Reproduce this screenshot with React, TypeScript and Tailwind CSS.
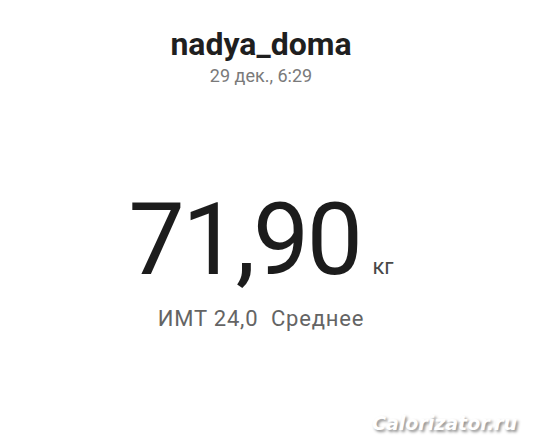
import React from 'react';

const App: React.FC = () => {
  return (
    <div className="relative w-[537px] h-[445px] bg-white overflow-hidden" style={{ fontFamily: 'Roboto, "Noto Sans", sans-serif' }}>
      <div className="flex flex-col items-center pr-[15px]">
        {/* Header */}
        <div className="mt-[24px] text-[32px] leading-[40px] font-bold text-[#1f1f1f]">nadya_doma</div>
        <div className="mt-[2px] text-[18px] leading-[20px] text-[#7a7a7a]">29 дек., 6:29</div>

        {/* Weight */}
        <div className="mt-[104px] flex items-baseline">
          <span className="text-[100px] leading-[100px] text-[#1c1c1c] tracking-[-2.5px]">71,90</span>
          <span className="ml-[12px] text-[22px] text-[#484848]">кг</span>
        </div>
        <div className="mt-[15px] text-[22px] leading-[28px] text-[#646464] tracking-[0.8px] whitespace-pre">ИМТ 24,0  Среднее</div>
      </div>

      {/* Watermark */}
      <div
        className="absolute right-[20px] bottom-[8px] text-[19px] font-bold italic text-white"
        style={{ fontFamily: '"DejaVu Sans", sans-serif', textShadow: '2px 2px 3px rgba(0,0,0,0.45)' }}
      >
        Calorizator.ru
      </div>
    </div>
  );
};

export default App;
